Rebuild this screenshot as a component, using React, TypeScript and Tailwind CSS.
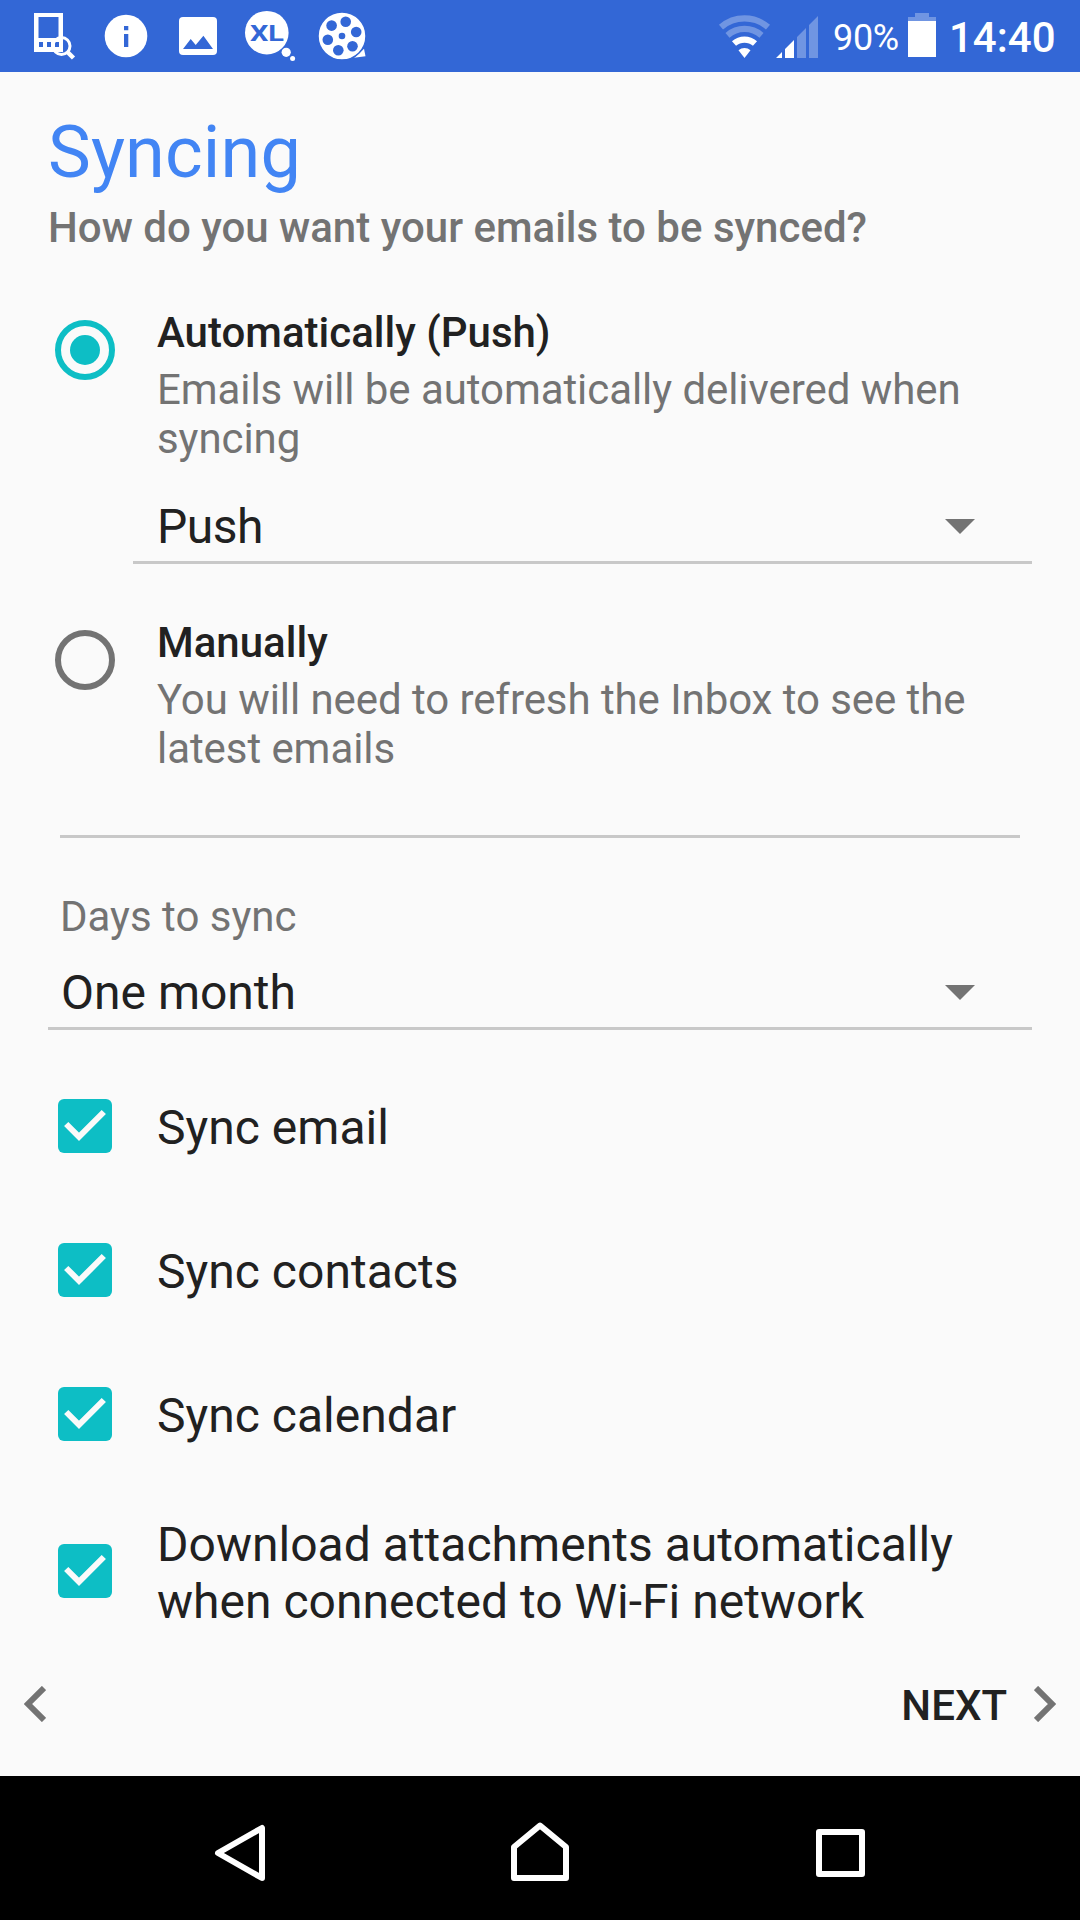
import React, { useState } from 'react';

const SearchDeviceIcon = () => (
  <svg viewBox="32 10 46 52" className="h-[52px] w-[46px]">
    <path fillRule="evenodd" fill="#fff" d="M34 13h29v39H34zM38.500 17v21H58.500V17zM39 42v5h4v-5zM47 42v5h4v-5zM55 42v5h4v-5z" />
    <circle cx="61.500" cy="46" r="8.500" fill="none" stroke="#fff" strokeWidth="3" />
    <path d="M67.500 52l6 6" stroke="#fff" strokeWidth="4.500" />
  </svg>
);

const InfoIcon = () => (
  <svg viewBox="104 14 44 44" className="h-[44px] w-[44px]">
    <circle cx="126" cy="36" r="21.300" fill="#fff" />
    <path d="M124 26h4.300v4.300H124zM124 34h4.300v13H124z" fill="#3367d6" />
  </svg>
);

const PictureIcon = () => (
  <svg viewBox="178 16 40 40" className="h-[40px] w-[40px]">
    <rect x="179" y="17" width="38" height="38" rx="4" fill="#fff" />
    <path d="M183 49l7.700-10 5 6 7.700-9.300L213 49z" fill="#3367d6" />
  </svg>
);

const XlIcon = () => (
  <svg viewBox="244 10 52 52" className="h-[52px] w-[52px]">
    <circle cx="266.800" cy="32.700" r="21.800" fill="#fff" />
    <circle cx="286.200" cy="52.300" r="4.600" fill="#fff" />
    <circle cx="292.600" cy="58.500" r="2.500" fill="#fff" />
    <text x="250" y="40.800" textLength="34" lengthAdjust="spacingAndGlyphs" fill="#3367d6" fontFamily="Roboto, sans-serif" fontWeight="700" fontSize="22.500">
      XL
    </text>
  </svg>
);

const ReelIcon = () => (
  <svg viewBox="317 11 50 50" className="h-[50px] w-[50px]">
    <path d="M354 57.700l10-9 1.500 7.500z" fill="#fff" />
    <circle cx="342" cy="36" r="24" fill="#fff" stroke="#3367d6" strokeWidth="1.500" />
    <g fill="#3367d6">
      <circle cx="342" cy="36" r="3.300" />
      <circle cx="345.700" cy="21.700" r="5.300" />
      <circle cx="331.600" cy="25.600" r="5.300" />
      <circle cx="327.800" cy="39.700" r="5.300" />
      <circle cx="338.300" cy="50.300" r="5.300" />
      <circle cx="352.500" cy="46.300" r="5.300" />
      <circle cx="356.200" cy="32" r="5.300" />
    </g>
  </svg>
);

const WifiIcon = () => (
  <svg viewBox="718 14 54 46" className="h-[46px] w-[54px]">
    <g fill="none" stroke="#fff" strokeWidth="6.200">
      <path d="M721 27.200a36 36 0 0 1 47 0" opacity="0.300" />
      <path d="M727.500 35.300a26 26 0 0 1 34 0" opacity="0.300" />
      <path d="M734 43.500a16 16 0 0 1 21 0" />
    </g>
    <path d="M738.500 50.300a9.300 9.300 0 0 1 12 0l-6 7.700z" fill="#fff" />
  </svg>
);

const SignalIcon = () => (
  <svg viewBox="776 14 43 46" className="h-[46px] w-[43px]">
    <path d="M776 58l6-6v6zM785 58v-9l9-9v18z" fill="#fff" />
    <path d="M797 58V37l9-9v30zM809 58V25l9-9v42z" fill="#fff" opacity="0.300" />
  </svg>
);

const BatteryIcon = () => (
  <svg viewBox="908 12 28 46" className="h-[46px] w-[28px]">
    <path d="M908 21v-4h7v-4h14v4h7v4z" fill="#fff" opacity="0.300" />
    <path d="M908 21h28v36h-28z" fill="#fff" />
  </svg>
);

const StatusBar = () => (
  <header className="flex h-[72px] items-start bg-[#3367d6] text-white">
    <div className="ml-[32px] mt-[10px]"><SearchDeviceIcon /></div>
    <div className="ml-[26px] mt-[14px]"><InfoIcon /></div>
    <div className="ml-[30px] mt-[16px]"><PictureIcon /></div>
    <div className="ml-[26px] mt-[10px]"><XlIcon /></div>
    <div className="ml-[21px] mt-[11px]"><ReelIcon /></div>
    <div className="ml-auto mt-[14px]"><WifiIcon /></div>
    <div className="ml-1 mt-[14px]"><SignalIcon /></div>
    <span className="ml-[14px] mt-[17px] w-[67px] whitespace-nowrap text-[36px] leading-[42px] tracking-[-0.3px]">90%</span>
    <div className="ml-2 mt-[12px]"><BatteryIcon /></div>
    <span className="ml-[13px] mr-[24px] mt-[13px] w-[107px] whitespace-nowrap text-[42px] font-medium leading-[49px]">14:40</span>
  </header>
);

interface RadioOptionProps {
  title: string;
  body: string;
  checked: boolean;
  onSelect: () => void;
}

const RadioOption: React.FC<RadioOptionProps> = ({ title, body, checked, onSelect }) => (
  <button type="button" role="radio" aria-checked={checked} onClick={onSelect} className="flex w-full items-start pl-[55px] text-left">
    <span
      className={`mt-3 flex h-[60px] w-[60px] shrink-0 items-center justify-center rounded-full border-[6px] ${
        checked ? 'border-[#0dbec5]' : 'border-[#737373]'
      }`}
    >
      {checked && <span className="h-[30px] w-[30px] rounded-full bg-[#0dbec5]" />}
    </span>
    <span className="ml-[42px] block w-[840px] text-[42px] leading-[49px]">
      <span className="block font-medium text-[#212121]">{title}</span>
      <span className="mt-2 block tracking-[-0.07px] text-[#737373]">{body}</span>
    </span>
  </button>
);

const Spinner = ({ value, className }: { value: string; className: string }) => (
  <div className={`mr-12 flex h-[66px] items-start justify-between border-b-[3px] border-[#c8c8c8] ${className}`}>
    <span className="pt-px text-[48px] leading-[56px] text-[#212121]">{value}</span>
    <svg viewBox="0 0 30 15" className="mr-[57px] mt-[21px] h-[15px] w-[30px]">
      <path d="M0 0h30L15 15z" fill="#737373" />
    </svg>
  </div>
);

interface CheckRowProps {
  label: string;
  checked: boolean;
  onToggle: () => void;
}

const CheckRow: React.FC<CheckRowProps> = ({ label, checked, onToggle }) => (
  <button type="button" role="checkbox" aria-checked={checked} onClick={onToggle} className="flex min-h-[144px] w-full items-center pl-[58px] text-left last:min-h-[146px] last:pt-6">
    <svg viewBox="0 0 54 54" className="h-[54px] w-[54px] shrink-0">
      {checked ? (
        <>
          <rect width="54" height="54" rx="6" fill="#0dbec5" />
          <path d="M8.200 25L21 37.800 45.800 13" fill="none" stroke="#fafafa" strokeWidth="6" />
        </>
      ) : (
        <rect x="3" y="3" width="48" height="48" rx="3" fill="none" stroke="#737373" strokeWidth="6" />
      )}
    </svg>
    <span className="ml-[45px] w-[840px] pt-[5px] text-[48px] leading-[56.500px] tracking-[0.02px] text-[#212121]">{label}</span>
  </button>
);

const NavBar = () => (
  <nav className="flex h-36 items-center bg-black">
    <svg viewBox="180 1776 120 144" className="ml-[180px] h-36 w-[120px]">
      <path d="M262 1828v50l-44-25z" fill="none" stroke="#fff" strokeWidth="6" strokeLinejoin="round" />
    </svg>
    <svg viewBox="480 1776 120 144" className="ml-[180px] h-36 w-[120px]">
      <path d="M514 1878v-31l26-21.500 26 21.500v31z" fill="none" stroke="#fff" strokeWidth="6" strokeLinejoin="round" />
    </svg>
    <svg viewBox="780 1776 120 144" className="ml-[180px] h-36 w-[120px]">
      <rect x="819" y="1832" width="43" height="42" fill="none" stroke="#fff" strokeWidth="6" strokeLinejoin="round" />
    </svg>
  </nav>
);

const SYNC_OPTIONS = [
  'Sync email',
  'Sync contacts',
  'Sync calendar',
  'Download attachments automatically when connected to Wi-Fi network',
];

export default function App() {
  const [mode, setMode] = useState<'push' | 'manual'>('push');
  const [enabled, setEnabled] = useState([true, true, true, true]);

  const toggle = (index: number) => {
    setEnabled((prev) => prev.map((value, i) => (i === index ? !value : value)));
  };

  return (
    <div className="flex h-[1920px] w-[1080px] flex-col overflow-hidden bg-[#fafafa] font-[Roboto,sans-serif]">
      <StatusBar />

      <main className="h-[1560px] pt-[39px]">
        <h1 className="pl-12 text-[72px] leading-[84px] tracking-[0.15px] text-[#4285f4]">Syncing</h1>
        <h2 className="mt-2 pl-12 text-[42px] font-medium leading-[49px] text-[#737373]">How do you want your emails to be synced?</h2>

        <div role="radiogroup" className="mt-14">
          <RadioOption
            title="Automatically (Push)"
            body="Emails will be automatically delivered when syncing"
            checked={mode === 'push'}
            onSelect={() => setMode('push')}
          />
          <Spinner value="Push" className="ml-[133px] mt-[35px] pl-6 tracking-[-0.5px]" />
          <div className="mt-[54px]">
            <RadioOption
              title="Manually"
              body="You will need to refresh the Inbox to see the latest emails"
              checked={mode === 'manual'}
              onSelect={() => setMode('manual')}
            />
          </div>
        </div>

        <div className="mx-[60px] mt-[62px] h-[3px] bg-[#c8c8c8]" />

        <p className="mt-[54px] pl-[60px] text-[42px] leading-[49px] text-[#737373]">Days to sync</p>
        <Spinner value="One month" className="ml-12 mt-[23px] pl-[13px]" />

        <div className="mt-6">
          {SYNC_OPTIONS.map((label, index) => (
            <CheckRow key={label} label={label} checked={enabled[index]} onToggle={() => toggle(index)} />
          ))}
        </div>
      </main>

      <footer className="flex h-36 items-center justify-between px-6">
        <svg viewBox="0 0 22 36" className="h-9 w-[22px]">
          <path d="M20 2L4 18l16 16" fill="none" stroke="#737373" strokeWidth="6" />
        </svg>
        <button type="button" className="flex items-center text-[42px] font-medium leading-[49px] text-[#212121]">
          <span className="mr-[27px] pt-[3px]">NEXT</span>
          <svg viewBox="0 0 22 36" className="h-9 w-[22px]">
            <path d="M2 2l16 16L2 34" fill="none" stroke="#737373" strokeWidth="6" />
          </svg>
        </button>
      </footer>

      <NavBar />
    </div>
  );
}
